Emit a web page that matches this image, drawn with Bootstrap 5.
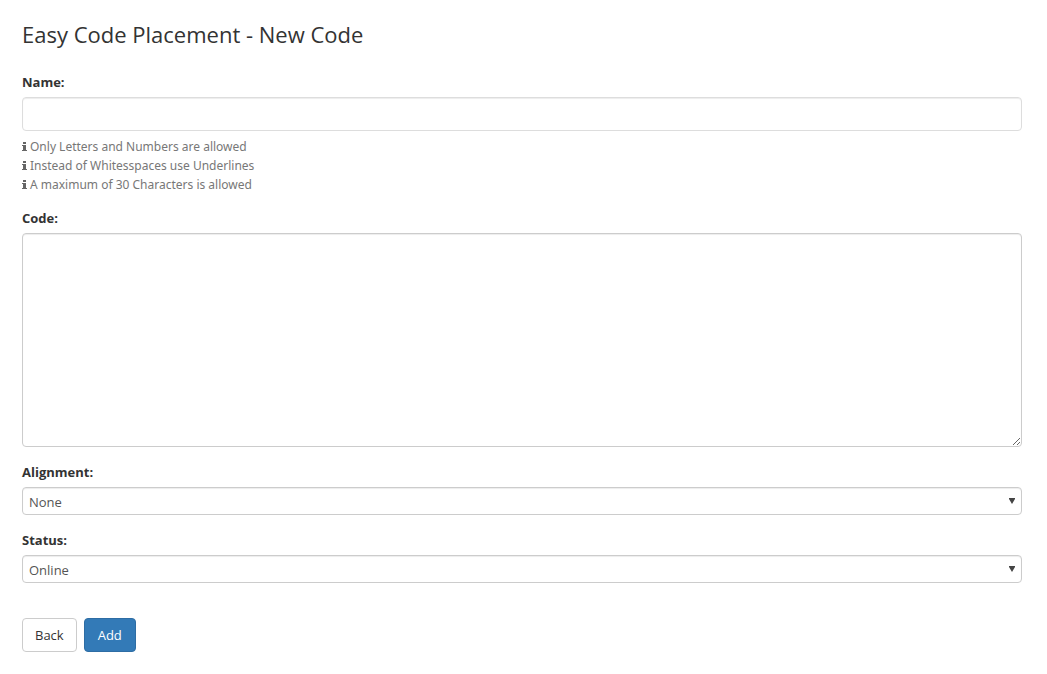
<!DOCTYPE html>
<html lang="en">
<head>
<meta charset="utf-8">
<meta name="viewport" content="width=device-width, initial-scale=1">
<title>Easy Code Placement - New Code</title>
<link href="https://cdn.jsdelivr.net/npm/bootstrap@5.3.0/dist/css/bootstrap.min.css" rel="stylesheet">
<style>
  body { font: 13px/20px "Open Sans", "Noto Sans", sans-serif; color: #333; background: #fff; }
  .page { padding: 20px 25px 20px 22px; }
  .page-title { font-size: 22px; line-height: 28px; font-weight: 400; margin-bottom: 24px; }
  .field { margin-bottom: 15px; }
  .form-label { display: block; font-weight: 700; margin-bottom: 5px; }
  .form-control, .form-select {
    font-size: 13px; line-height: 20px; color: #555; border: 1px solid #ccc; border-radius: 4px;
    box-shadow: inset 0 1px 1px rgba(0, 0, 0, .075);
  }
  .form-control { padding: 6px 12px; }
  .name-input { border-color: #ddd; }
  .code-input { height: 214px; resize: both; }
  .form-select {
    padding: 4px 24px 2px 6px; height: 28px;
    background-image: url("data:image/svg+xml,%3Csvg xmlns='http://www.w3.org/2000/svg' viewBox='0 0 6 6'%3E%3Cpath fill='%23444' d='M0 0h6v1L3 6L0 1z'/%3E%3C/svg%3E");
    background-size: 6px 6px; background-position: right 6px top 10px;
  }
  .hints { margin: 6px 0 14px; font-family: "Noto Sans", "Open Sans", sans-serif; font-size: 12px; line-height: 19px; color: #777; }
  .hint-icon { width: 5px; height: 9px; margin-right: 3px; vertical-align: baseline; }
  .actions { gap: 7px; margin-top: 35px; }
  .btn { font-size: 13px; line-height: 20px; padding: 6px 12px; border-radius: 4px; }
  .btn-back { color: #333; background: #fff; border-color: #ccc; }
  .btn-add { color: #fff; background: #337ab7; border-color: #2e6da4; font-weight: 500; padding: 6px 13px; }
</style>
</head>
<body>
<svg class="d-none" aria-hidden="true">
  <symbol id="info" viewBox="0 0 5 9"><path d="M1 0h3v2H1zM0 3h4v5h1v1H0V8h1V4H0z"/></symbol>
</svg>
<main class="container-fluid page">
  <h1 class="page-title">Easy Code Placement - New Code</h1>
  <form>
    <div>
      <label class="form-label" for="name">Name:</label>
      <input class="form-control name-input" id="name" type="text" aria-describedby="name-hints">
      <div class="hints" id="name-hints">
        <div><svg class="hint-icon" fill="#666" aria-hidden="true"><use href="#info"/></svg>Only Letters and Numbers are allowed</div>
        <div><svg class="hint-icon" fill="#666" aria-hidden="true"><use href="#info"/></svg>Instead of Whitesspaces use Underlines</div>
        <div><svg class="hint-icon" fill="#666" aria-hidden="true"><use href="#info"/></svg>A maximum of 30 Characters is allowed</div>
      </div>
    </div>
    <div class="field">
      <label class="form-label" for="code">Code:</label>
      <textarea class="form-control code-input" id="code"></textarea>
    </div>
    <div class="field">
      <label class="form-label" for="alignment">Alignment:</label>
      <select class="form-select" id="alignment"><option>None</option><option>Left</option><option>Center</option><option>Right</option></select>
    </div>
    <div class="field">
      <label class="form-label" for="status">Status:</label>
      <select class="form-select" id="status"><option>Online</option><option>Offline</option></select>
    </div>
    <div class="d-flex actions">
      <button class="btn btn-back" type="button">Back</button>
      <button class="btn btn-add" type="submit">Add</button>
    </div>
  </form>
</main>
<script src="https://cdn.jsdelivr.net/npm/bootstrap@5.3.0/dist/js/bootstrap.bundle.min.js"></script>
</body>
</html>
